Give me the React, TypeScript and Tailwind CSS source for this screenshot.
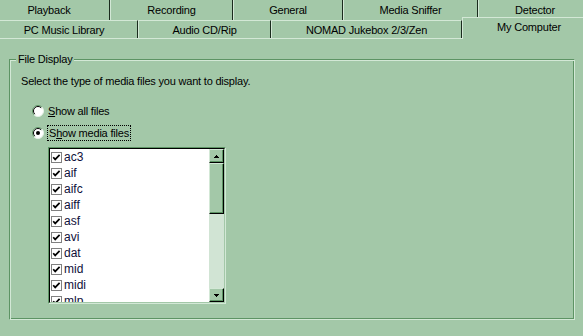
import React from "react";

const row1 = [
  { label: "Playback", w: "w-[110px]", pad: "pr-[11px]" },
  { label: "Recording", w: "w-[123px]", pad: "" },
  { label: "General", w: "w-[110px]", pad: "" },
  { label: "Media Sniffer", w: "w-[135px]", pad: "" },
  { label: "Detector", w: "w-[114px]", pad: "" },
];

const row2 = [
  { label: "PC Music Library", w: "w-[138px]", pad: "pr-[9px]" },
  { label: "Audio CD/Rip", w: "w-[133px]", pad: "" },
  { label: "NOMAD Jukebox 2/3/Zen", w: "w-[191px]", pad: "" },
];

const fileTypes = ["ac3", "aif", "aifc", "aiff", "asf", "avi", "dat", "mid", "midi", "mlp"];

function Radio({ checked }: { checked?: boolean }) {
  return (
    <svg width="12" height="12" viewBox="0 0 12 12" className="shrink-0">
      <circle cx="6" cy="6" r="5.5" fill="#fff" />
      <path d="M2.1 9.9A5.5 5.5 0 0 1 9.9 2.1" fill="none" stroke="#5d9464" />
      <path d="M2.8 9.2A4.5 4.5 0 0 1 9.2 2.8" fill="none" stroke="#000" />
      <path d="M9.9 2.1A5.5 5.5 0 0 1 2.1 9.9" fill="none" stroke="#e6f2e8" />
      {checked && <circle cx="6" cy="6" r="2" fill="#000" />}
    </svg>
  );
}

function CheckBox() {
  return (
    <svg width="11" height="11" viewBox="0 0 11 11" className="shrink-0">
      <rect x="0.5" y="0.5" width="10" height="10" fill="#fff" stroke="#808080" />
      <path d="M2.2 5.2L4.2 7.4L8.6 2.8" fill="none" stroke="#000" strokeWidth="1.7" />
    </svg>
  );
}

function ScrollButton({ dir }: { dir: "up" | "down" }) {
  return (
    <div className="h-[14px] shrink-0 flex items-center justify-center border border-t-[#d3e8d6] border-l-[#d3e8d6] border-r-black border-b-black bg-[#a3c8a8] shadow-[inset_-1px_-1px_0_#5d9464]">
      <svg width="5" height="3" viewBox="0 0 5 3" shapeRendering="crispEdges">
        {dir === "up" ? (
          <polygon points="2.5,0 5,3 0,3" fill="#000" />
        ) : (
          <polygon points="0,0 5,0 2.5,3" fill="#000" />
        )}
      </svg>
    </div>
  );
}

export default function App() {
  return (
    <div className="w-[583px] h-[336px] overflow-hidden bg-[#a3c8a8] text-black text-[11px] leading-[13px] tracking-[-0.2px] font-['Liberation_Sans',Arial,sans-serif]">
      {/* Tab strip, back row */}
      <div className="flex h-[20px]">
        {row1.map((t, i) => (
          <div
            key={t.label}
            className={`${t.w} ${t.pad} shrink-0 h-full flex justify-center pt-[4px] border-r border-r-[#1a2b1d] ${i > 0 ? "border-l border-l-[#d3e8d6]" : ""}`}
          >
            {t.label}
          </div>
        ))}
      </div>

      {/* Tab strip, front row */}
      <div className="flex items-start h-[18px]">
        {row2.map((t, i) => (
          <div
            key={t.label}
            className={`${t.w} ${t.pad} shrink-0 h-[18px] flex justify-center pt-[3px] border-t border-t-[#d3e8d6] border-r border-r-[#1a2b1d] ${i > 0 ? "border-l border-l-[#d3e8d6]" : ""}`}
          >
            {t.label}
          </div>
        ))}
        <div className="relative z-10 w-[133px] shrink-0 h-[22px] -mt-[3px] flex justify-center pt-[3px] bg-[#a3c8a8] border-t border-l border-t-[#d3e8d6] border-l-[#d3e8d6]">
          My Computer
        </div>
      </div>
      <div className="h-px bg-[#d3e8d6]" />

      {/* Group box */}
      <fieldset className="mt-[14px] ml-[9px] w-[566px] pl-[6px] pb-[15px] border border-t-[#5d9464] border-l-[#5d9464] border-r-[#d3e8d6] border-b-[#d3e8d6] shadow-[inset_1px_1px_0_#d3e8d6,inset_-1px_-1px_0_#5d9464]">
        <legend className="px-[2px] leading-[13px] bg-[#a3c8a8]">File Display</legend>

        <div className="mt-[9px] ml-[5px]">Select the type of media files you want to display.</div>

        <div className="mt-[17px] ml-[16px] flex items-center h-[12px] gap-[4px]">
          <Radio />
          <span>
            <span className="underline">S</span>how all files
          </span>
        </div>

        <div className="mt-[10px] ml-[16px] flex items-center h-[12px] gap-[3px]">
          <Radio checked />
          <span className="border border-dotted border-black px-px leading-[14px]">
            S<span className="underline">h</span>ow media files
          </span>
        </div>

        {/* List box */}
        <div className="mt-[8px] ml-[32px] w-[178px] h-[157px] border border-t-[#5d9464] border-l-[#5d9464] border-r-[#d3e8d6] border-b-[#d3e8d6]">
          <div className="flex h-full border border-t-black border-l-black border-r-[#a3c8a8] border-b-[#a3c8a8]">
            <div className="flex-1 bg-white overflow-hidden">
              {fileTypes.map((f) => (
                <div key={f} className="h-[16px] flex items-center pl-px gap-[2px] text-[#10103a] text-[12px] tracking-normal">
                  <CheckBox />
                  <span>{f}</span>
                </div>
              ))}
            </div>
            <div className="w-[15px] flex flex-col bg-[#d1e4d4]">
              <ScrollButton dir="up" />
              <div className="h-[51px] shrink-0 border border-t-[#d3e8d6] border-l-[#d3e8d6] border-r-black border-b-black bg-[#a3c8a8] shadow-[inset_-1px_-1px_0_#5d9464]" />
              <div className="flex-1" />
              <ScrollButton dir="down" />
            </div>
          </div>
        </div>
      </fieldset>
    </div>
  );
}
